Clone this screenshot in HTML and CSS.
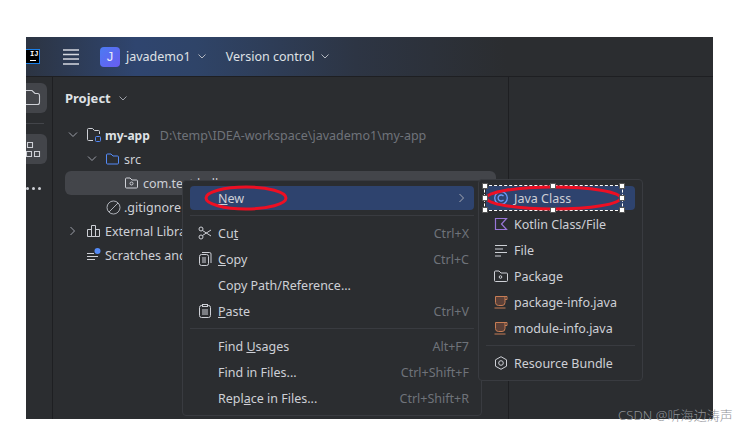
FILE: index.html
```html
<!DOCTYPE html>
<html>
<head>
  <meta charset="UTF-8">
  <title>New Java Class</title>
  <link rel="stylesheet" href="styles.css">
</head>
<body>
  <div class="window">
    <!-- Top bar -->
    <div class="topbar">
      <div class="logo"><span class="logoText">IJ</span><span class="logoBar"></span></div>
      <svg class="burger" width="16" height="16" viewBox="0 0 16 16"><path d="M0 1h16M0 5.500h16M0 10h16M0 15h16" stroke="#d5d8df" stroke-width="1.300" fill="none"/></svg>
      <div class="badge">J</div>
      <span class="projectName">javademo1</span>
      <svg class="chev" width="8" height="5" viewBox="0 0 8 5"><path d="M.5.500 4 4 7.500.500" stroke="#b4b8c0" fill="none"/></svg>
      <span class="vcs">Version control</span>
      <svg class="chev" width="8" height="5" viewBox="0 0 8 5"><path d="M.5.500 4 4 7.500.500" stroke="#b4b8c0" fill="none"/></svg>
    </div>

    <div class="main">
      <!-- Left tool strip -->
      <div class="strip">
        <div class="toolBtn">
          <svg width="22" height="18" viewBox="0 0 22 18"><path d="M-2 1.500h15l3 3h2.500a2 2 0 0 1 2 2v7a2 2 0 0 1-2 2H-2" stroke="#ced0d6" stroke-width="1.100" fill="none"/></svg>
        </div>
        <div class="stripLine"></div>
        <div class="toolBtn">
          <svg width="22" height="20" viewBox="0 0 22 20"><path d="M8.500 3.500h5v5h-5zM7.500 12.500h5v5h-5zM15.500 12.500h5v5h-5z" stroke="#ced0d6" stroke-width="1.100" fill="none"/></svg>
        </div>
        <div class="dots"><i></i><i></i><i></i></div>
      </div>

      <!-- Project panel -->
      <div class="project">
        <div class="panelTitle">
          <b>Project</b>
          <svg width="8" height="5" viewBox="0 0 8 5"><path d="M.5.500 4 4 7.500.500" stroke="#9da0a8" fill="none"/></svg>
        </div>
        <div class="tree">
          <div class="treeRow level0">
            <svg class="arrow" width="10" height="6" viewBox="0 0 10 6"><path d="M1 .500 5 4.500 9 .500" stroke="#9da0a8" fill="none"/></svg>
            <svg class="treeIcon rootIcon" width="17" height="16" viewBox="0 0 17 16"><path d="M7 13.500H2.500a1 1 0 0 1-1-1v-10a1 1 0 0 1 1-1h4l2 2h4a1 1 0 0 1 1 1V7" stroke="#ced0d6" fill="none"/><rect x="9.500" y="9.500" width="5" height="5" rx="1" stroke="#548af7" fill="none"/></svg>
            <b class="rootName">my-app</b>
            <span class="path">D:\temp\IDEA-workspace\javademo1\my-app</span>
          </div>
          <div class="treeRow level1">
            <svg class="arrow" width="10" height="6" viewBox="0 0 10 6"><path d="M1 .500 5 4.500 9 .500" stroke="#9da0a8" fill="none"/></svg>
            <svg class="treeIcon" width="15" height="14" viewBox="0 0 15 14"><path d="M1.500 3a1 1 0 0 1 1-1h3.500l2 2h4.500a1 1 0 0 1 1 1v6a1 1 0 0 1-1 1h-10a1 1 0 0 1-1-1z" stroke="#548af7" fill="none"/></svg>
            <span>src</span>
          </div>
          <div class="treeRow level2 current">
            <svg class="treeIcon" width="15" height="14" viewBox="0 0 15 14"><path d="M1.500 3a1 1 0 0 1 1-1h3.500l2 2h4.500a1 1 0 0 1 1 1v6a1 1 0 0 1-1 1h-10a1 1 0 0 1-1-1z" stroke="#ced0d6" fill="none"/><circle cx="7.500" cy="7.500" r="1.500" stroke="#ced0d6" fill="none"/></svg>
            <span>com.test.hello</span>
          </div>
          <div class="treeRow level1b">
            <svg class="treeIcon" width="15" height="15" viewBox="0 0 15 15"><circle cx="7.500" cy="7.500" r="6.500" stroke="#aeb1b8" fill="none"/><path d="M3 12 12 3" stroke="#aeb1b8" fill="none"/></svg>
            <span>.gitignore</span>
          </div>
          <div class="treeRow level0">
            <svg class="arrow side" width="6" height="10" viewBox="0 0 6 10"><path d="M.500 1 4.500 5 .500 9" stroke="#9da0a8" fill="none"/></svg>
            <svg class="treeIcon" width="15" height="14" viewBox="0 0 15 14"><path d="M1.500 5.500h4v7h-4zM5.500 1.500h4v11h-4zM9.500 5.500h4v7h-4z" stroke="#ced0d6" fill="none"/></svg>
            <span>External Libraries</span>
          </div>
          <div class="treeRow level0">
            <span class="arrowGap"></span>
            <svg class="treeIcon" width="15" height="14" viewBox="0 0 15 14"><path d="M1 5.500h7M1 8.500h11M1 11.500h8" stroke="#ced0d6" fill="none"/><circle cx="11.500" cy="3" r="3" fill="#548af7"/></svg>
            <span>Scratches and Consoles</span>
          </div>
        </div>
      </div>

      <div class="editor"></div>
    </div>

    <!-- Context menu -->
    <div class="menu">
      <div class="item active"><span class="icon"></span><span class="label"><u>N</u>ew</span><svg class="more" width="6" height="10" viewBox="0 0 6 10"><path d="M.500 1 4.500 5 .500 9" stroke="#a5a9b3" fill="none"/></svg></div>
      <div class="sep"></div>
      <div class="item">
        <svg class="icon" width="14" height="14" viewBox="0 0 14 14"><circle cx="3" cy="3" r="2" stroke="#ced0d6" fill="none"/><circle cx="3" cy="11" r="2" stroke="#ced0d6" fill="none"/><path d="M4.500 4.500 13 10M4.500 9.500 13 4" stroke="#ced0d6" fill="none"/></svg>
        <span class="label">Cu<u>t</u></span><span class="keys">Ctrl+X</span>
      </div>
      <div class="item">
        <svg class="icon" width="14" height="14" viewBox="0 0 14 14"><rect x="1.500" y="2.500" width="9" height="11" rx="2" stroke="#ced0d6" fill="none"/><path d="M4 6h4M4 8h4M4 10h4M4 .500h7.500a1.500 1.500 0 0 1 1.500 1.500v9" stroke="#ced0d6" fill="none"/></svg>
        <span class="label"><u>C</u>opy</span><span class="keys">Ctrl+C</span>
      </div>
      <div class="item"><span class="icon"></span><span class="label">Copy Path/Reference...</span></div>
      <div class="item">
        <svg class="icon" width="14" height="14" viewBox="0 0 14 14"><rect x="1.500" y="1.500" width="11" height="12" rx="2" stroke="#ced0d6" fill="none"/><rect x="4.500" y=".500" width="5" height="2" fill="#2b2d30" stroke="#ced0d6"/><path d="M4 6h6M4 8h6M4 10h6" stroke="#ced0d6" fill="none"/></svg>
        <span class="label"><u>P</u>aste</span><span class="keys">Ctrl+V</span>
      </div>
      <div class="sep"></div>
      <div class="item"><span class="icon"></span><span class="label">Find <u>U</u>sages</span><span class="keys">Alt+F7</span></div>
      <div class="item"><span class="icon"></span><span class="label">Find in Files...</span><span class="keys">Ctrl+Shift+F</span></div>
      <div class="item"><span class="icon"></span><span class="label">Repl<u>a</u>ce in Files...</span><span class="keys">Ctrl+Shift+R</span></div>
    </div>

    <!-- New submenu -->
    <div class="menu submenu">
      <div class="item active">
        <svg class="icon" width="14" height="14" viewBox="0 0 14 14"><circle cx="7" cy="7" r="6.300" stroke="#6b9bfa" stroke-width="1.300" fill="none"/><path d="M9.500 5.200a3 3 0 1 0 0 3.600" stroke="#6b9bfa" stroke-width="1.300" fill="none"/></svg>
        <span class="label">Java Class</span>
      </div>
      <div class="item">
        <svg class="icon" width="14" height="14" viewBox="0 0 14 14"><path d="M1.500 1.500h11l-5 5.500 5 5.500h-11z" stroke="#9876d8" stroke-width="1.200" fill="none"/></svg>
        <span class="label">Kotlin Class/File</span>
      </div>
      <div class="item">
        <svg class="icon" width="14" height="14" viewBox="0 0 14 14"><path d="M1 2.500h12M1 6h8M1 9.500h12M1 13h6" stroke="#ced0d6" fill="none"/></svg>
        <span class="label">File</span>
      </div>
      <div class="item">
        <svg class="icon" width="14" height="14" viewBox="0 0 14 14"><path d="M.500 3a1 1 0 0 1 1-1h3.500l2 2h5.500a1 1 0 0 1 1 1v6.500a1 1 0 0 1-1 1h-11a1 1 0 0 1-1-1z" stroke="#ced0d6" fill="none"/><circle cx="6.500" cy="8" r="1.300" stroke="#ced0d6" fill="none"/></svg>
        <span class="label">Package</span>
      </div>
      <div class="item">
        <svg class="icon" width="14" height="14" viewBox="0 0 14 14"><path d="M1.500 1.500h9.500v6a3 3 0 0 1-3 3h-3.500a3 3 0 0 1-3-3z" fill="#5b4038" stroke="#c77d55"/><path d="M11 1.500h2v3h-2M.500 13h11" stroke="#c77d55" fill="none"/></svg>
        <span class="label">package-info.java</span>
      </div>
      <div class="item">
        <svg class="icon" width="14" height="14" viewBox="0 0 14 14"><path d="M1.500 1.500h9.500v6a3 3 0 0 1-3 3h-3.500a3 3 0 0 1-3-3z" fill="#5b4038" stroke="#c77d55"/><path d="M11 1.500h2v3h-2M.500 13h11" stroke="#c77d55" fill="none"/></svg>
        <span class="label">module-info.java</span>
      </div>
      <div class="sep"></div>
      <div class="item">
        <svg class="icon" width="14" height="14" viewBox="0 0 14 14"><path d="M7 .700 12.500 3.800v6.400L7 13.300 1.500 10.200V3.800z" stroke="#ced0d6" stroke-linejoin="round" fill="none"/><circle cx="7" cy="7" r="2.300" stroke="#ced0d6" fill="none"/></svg>
        <span class="label">Resource Bundle</span>
      </div>
    </div>

    <!-- Red marks drawn on the screenshot -->
    <svg class="mark" width="84" height="26" viewBox="0 0 84 26"><ellipse cx="42" cy="13" rx="40" ry="11" stroke="#ee0f23" stroke-width="3" fill="none"/></svg>
    <div class="selectBox">
      <svg width="139" height="26" viewBox="0 0 139 26"><ellipse cx="69.500" cy="13" rx="67" ry="11" stroke="#ee0f23" stroke-width="3" fill="none"/></svg>
      <i class="handle tl"></i><i class="handle tc"></i><i class="handle tr"></i>
      <i class="handle ml"></i><i class="handle mr"></i>
      <i class="handle bl"></i><i class="handle bc"></i><i class="handle br"></i>
    </div>
  </div>
  <div class="watermark">CSDN @听海边涛声</div>
</body>
</html>
```

FILE: styles.css
```css
body {
  margin: 0;
  padding: 37px 31px 9px 26px;
  background-color: #fff;
  font-family: "Noto Sans", "Noto Sans CJK SC", sans-serif;
  font-size: 12.500px;
  color: #ced0d6;
  overflow: hidden;
}
.window {
  position: relative;
  width: 687px;
  height: 382px;
  background-color: #2b2d30;
  overflow: hidden;
  display: flex;
  flex-direction: column;
}
/* Top bar */
.topbar {
  height: 40px;
  flex: none;
  box-sizing: border-box;
  border-bottom: 1px solid #1e1f22;
  background: linear-gradient(90deg, #2c3442 0, #2f456f 110px, #2f4468 170px, #2d3544 330px, #2b2d30 480px);
  display: flex;
  align-items: center;
}
.logo {
  width: 14px;
  height: 15px;
  box-sizing: border-box;
  background-color: #000;
  border: 1px solid #1a7fe8;
  border-left: 0;
  color: #fff;
  font: bold 7px "Liberation Mono", monospace;
  line-height: 7px;
  text-align: center;
  display: flex;
  flex-direction: column;
  align-items: flex-end;
  padding: 1px 1px 0 0;
  margin-right: 23px;
}
.logoText {
  width: 8px;
}
.logoBar {
  width: 6px;
  height: 1px;
  margin: 2px 2px 0 0;
  background-color: #fff;
}
.burger {
  margin-right: 21px;
}
.badge {
  width: 20px;
  height: 20px;
  border-radius: 4px;
  background: linear-gradient(135deg, #4b7bf2, #6a5cf0);
  color: #e8ecf8;
  font: 13px/20px "Liberation Sans", sans-serif;
  text-align: center;
  margin-right: 6px;
}
.projectName {
  color: #dfe1e5;
  margin-right: 7px;
}
.vcs {
  color: #dfe1e5;
  margin: 0 7px 0 20px;
}
.main {
  flex: 1;
  display: flex;
  min-height: 0;
}
/* Left tool strip */
.strip {
  width: 27px;
  flex: none;
  box-sizing: border-box;
  border-right: 1px solid #1e1f22;
  padding-top: 6px;
}
.toolBtn {
  width: 21px;
  height: 30px;
  border-radius: 0 6px 6px 0;
  background-color: #43454a;
  display: flex;
  align-items: center;
  justify-content: flex-end;
  overflow: hidden;
}
.toolBtn svg {
  flex: none;
  margin-right: 6px;
}
.stripLine {
  width: 18px;
  height: 1px;
  margin: 10px 0;
  background-color: #43454a;
}
.dots {
  display: flex;
  gap: 3px;
  margin-top: 23px;
}
.dots i {
  width: 3px;
  height: 3px;
  border-radius: 50%;
  background-color: #ced0d6;
}
/* Project panel */
.project {
  width: 456px;
  flex: none;
  box-sizing: border-box;
  border-right: 1px solid #1e1f22;
  padding: 0 12px 0 12px;
}
.panelTitle {
  height: 42px;
  display: flex;
  align-items: center;
  gap: 8px;
  color: #dfe1e5;
  font-size: 13px;
}
.tree {
  margin-top: 4px;
}
.treeRow {
  height: 24px;
  border-radius: 6px;
  display: flex;
  align-items: center;
  white-space: nowrap;
  color: #ced0d6;
  overflow: hidden;
}
.level0 {
  padding-left: 3px;
}
.level1 {
  padding-left: 22px;
}
.level1b {
  padding-left: 41px;
}
.level2 {
  padding-left: 59px;
}
.current {
  background-color: #43454a;
}
.arrow {
  margin-right: 8px;
  flex: none;
}
.arrow.side {
  margin-left: 2px;
  margin-right: 10px;
}
.arrowGap {
  width: 18px;
  flex: none;
}
.treeIcon {
  margin-right: 4px;
  flex: none;
}
.level1b .treeIcon {
  margin-right: 3px;
}
.rootIcon {
  margin-right: 2px;
}
.rootName {
  color: #dfe1e5;
  font-size: 12px;
  margin-right: 10px;
}
.path {
  color: #6f737a;
}
.editor {
  flex: 1;
}
/* Popup menus */
.menu {
  position: absolute;
  left: 156px;
  top: 143px;
  width: 300px;
  box-sizing: border-box;
  padding: 5px 7px;
  border: 1px solid #393b40;
  border-radius: 4px;
  background-color: #2b2d30;
  display: flex;
  flex-direction: column;
  gap: 2px;
}
.submenu {
  left: 452px;
  top: 142px;
  width: 165px;
  padding: 6px 7px 5px 7px;
}
.item {
  height: 24px;
  flex: none;
  border-radius: 4px;
  display: flex;
  align-items: center;
  white-space: nowrap;
  padding: 0 5px 0 8px;
}
.submenu .item {
  padding-left: 8px;
}
.active {
  background-color: #2e436e;
}
.icon {
  width: 14px;
  height: 14px;
  flex: none;
  margin-right: 6px;
}
.label {
  flex: 1;
}
.keys {
  color: #6f737a;
}
.more {
  margin-right: 4px;
}
.sep {
  height: 1px;
  flex: none;
  margin: 3px 0;
  background-color: #393b40;
}
/* Marks on top of the screenshot */
.mark {
  position: absolute;
  left: 178px;
  top: 148px;
}
.selectBox {
  position: absolute;
  left: 458px;
  top: 148px;
  width: 139px;
  height: 26px;
  box-sizing: border-box;
  border: 1px dashed #fff;
}
.selectBox svg {
  position: absolute;
  left: -1px;
  top: -1px;
}
.handle {
  position: absolute;
  width: 4px;
  height: 4px;
  background-color: #fff;
  border: 1px solid #555;
}
.tl, .tc, .tr {
  top: -3px;
}
.ml, .mr {
  top: 9px;
}
.bl, .bc, .br {
  bottom: -3px;
}
.tl, .ml, .bl {
  left: -3px;
}
.tc, .bc {
  left: 65px;
}
.tr, .mr, .br {
  right: -3px;
}
.watermark {
  position: absolute;
  left: 618px;
  top: 405px;
  color: #8f9297;
  font-size: 13px;
  font-weight: 300;
  letter-spacing: .1px;
}
```
